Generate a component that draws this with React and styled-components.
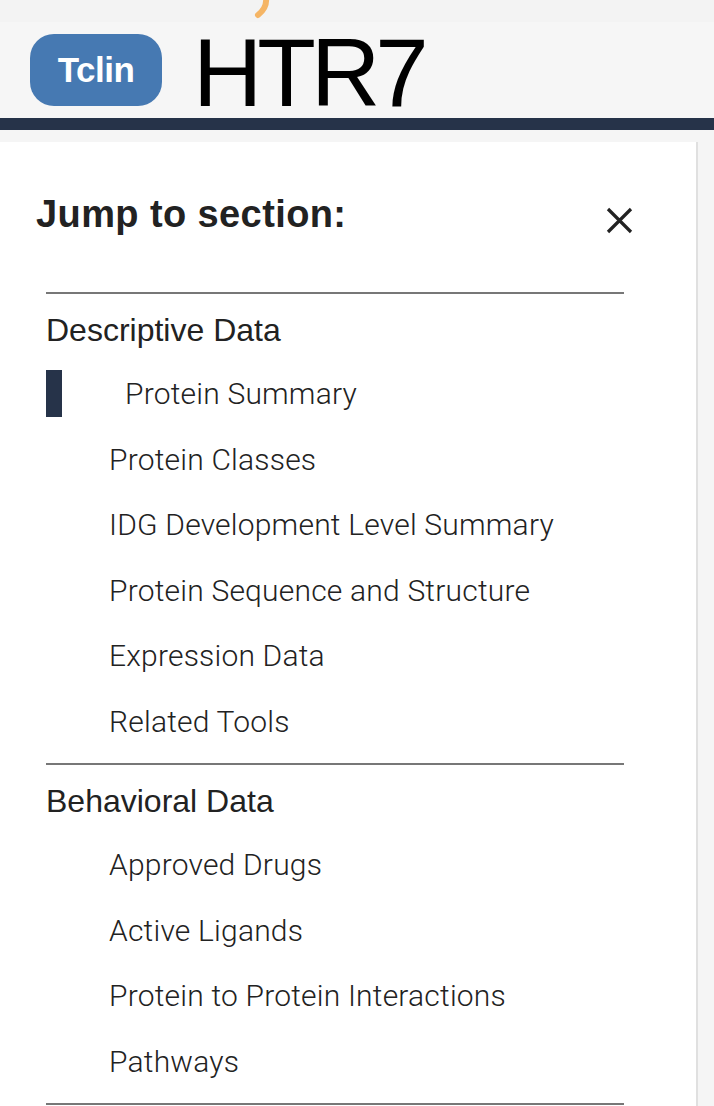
import styled, { createGlobalStyle } from 'styled-components';

const GlobalStyle = createGlobalStyle`
    html, body {
        margin: 0;
        padding: 0;
        background: #f5f5f5;
    }
    body {
        font-family: "Liberation Sans", Arial, sans-serif;
        color: #222;
    }
`;

const sections = [
    {
        title: 'Descriptive Data',
        items: [
            'Protein Summary',
            'Protein Classes',
            'IDG Development Level Summary',
            'Protein Sequence and Structure',
            'Expression Data',
            'Related Tools',
        ],
    },
    {
        title: 'Behavioral Data',
        items: ['Approved Drugs', 'Active Ligands', 'Protein to Protein Interactions', 'Pathways'],
    },
];

const TopStrip = styled.div`
    height: 22px;
    background: #f3f3f3;
    display: flex;
    padding-left: 253px;
`;

const Header = styled.div`
    height: 96px;
    background: #f6f6f6;
    display: flex;
    align-items: center;
    padding-left: 30px;
    gap: 31px;
`;

const Badge = styled.div`
    width: 132px;
    height: 72px;
    border-radius: 24px;
    background: #4679b2;
    color: #fff;
    font-weight: 700;
    font-size: 35px;
    letter-spacing: -0.5px;
    display: flex;
    align-items: center;
    justify-content: center;
`;

const Symbol = styled.h1`
    margin: 6px 0 0;
    font-size: 96px;
    line-height: 96px;
    font-weight: 400;
    letter-spacing: -5px;
    color: #000;
`;

const DarkBar = styled.div`
    height: 12px;
    background: #263349;
`;

const Panel = styled.div`
    margin-top: 12px;
    width: 696px;
    min-height: 980px;
    background: #fff;
    border-right: 2px solid #e0e0e0;
    padding-top: 50px;
`;

const TitleRow = styled.div`
    display: flex;
    justify-content: space-between;
    align-items: flex-start;
    padding: 0 63px 0 36px;
`;

const Title = styled.h2`
    margin: 0;
    font-size: 38px;
    line-height: 44px;
    font-weight: 700;
    letter-spacing: 0.4px;
    color: #222;
`;

const CloseButton = styled.button`
    margin-top: 15px;
    padding: 0;
    border: 0;
    background: none;
    width: 27px;
    height: 27px;
    display: flex;
`;

const Nav = styled.nav`
    margin: 56px 0 0 46px;
    width: 578px;
`;

const Section = styled.div`
    border-top: 2px solid #777;
    padding-bottom: 18px;
`;

const SectionTitle = styled.div`
    margin-top: 18px;
    font-size: 32px;
    line-height: 36px;
    color: #222;
`;

const List = styled.div`
    margin-top: 22px;
    display: flex;
    flex-direction: column;
    gap: 18.6px;
`;

const Item = styled.div`
    height: 47px;
    line-height: 47px;
    padding-left: 63px;
    border-left: ${(p) => (p.$active ? '16px solid #263349' : '0')};
    font-family: Roboto, "Liberation Sans", sans-serif;
    font-weight: 300;
    font-size: 30px;
    letter-spacing: 0.2px;
    color: #222;
    white-space: nowrap;
`;

const App = () => (
    <>
        <GlobalStyle />
        <TopStrip>
            <svg width="18" height="22" viewBox="0 0 18 22">
                <path d="M13 -2 C14 6 10 11 5 15" fill="none" stroke="#f5b565" strokeWidth="6" strokeLinecap="round" />
            </svg>
        </TopStrip>
        <Header>
            <Badge>Tclin</Badge>
            <Symbol>HTR7</Symbol>
        </Header>
        <DarkBar />
        <Panel>
            <TitleRow>
                <Title>Jump to section:</Title>
                <CloseButton aria-label="close">
                    <svg width="27" height="27" viewBox="0 0 27 27">
                        <path d="M2 2 L25 25 M25 2 L2 25" stroke="#222" strokeWidth="3.2" />
                    </svg>
                </CloseButton>
            </TitleRow>
            <Nav>
                {sections.map((s) => (
                    <Section key={s.title}>
                        <SectionTitle>{s.title}</SectionTitle>
                        <List>
                            {s.items.map((item, i) => (
                                <Item key={item} $active={s.title === 'Descriptive Data' && i === 0}>
                                    {item}
                                </Item>
                            ))}
                        </List>
                    </Section>
                ))}
                <Section />
            </Nav>
        </Panel>
    </>
);

export default App;
